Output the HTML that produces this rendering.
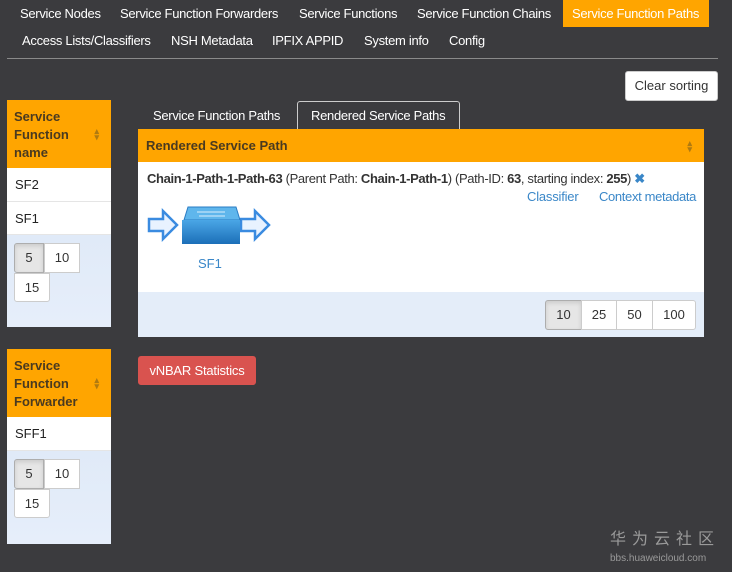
<!DOCTYPE html>
<html><head><meta charset="utf-8"><style>
*{box-sizing:border-box;margin:0;padding:0}
body{width:732px;height:572px;background:#3b3b3e;font-family:"Liberation Sans",sans-serif;font-size:13px;color:#333;position:relative;overflow:hidden}
.a{position:absolute}
.nav{color:#fff;font-size:13px;letter-spacing:-0.3px;white-space:nowrap}
.orange{background:#ffa500}
.hdr{color:#4a3a20;font-weight:bold;font-size:13px;line-height:18px;padding:8px 7px}
.sort{position:absolute;right:12px;top:50%;margin-top:-6px;color:#b07a10;font-size:9px;line-height:6px}
.row{background:#fff;border-bottom:1px solid #e5e5e5;padding:0 8px;display:flex;align-items:center;color:#222}
.foot{background:linear-gradient(#e0eaf8,#e6eefa)}
.btn{position:absolute;background:#fff;border:1px solid #ccc;text-align:center;color:#333;font-size:13px}
.btn.on{background:#e6e6e6;box-shadow:inset 0 2px 4px rgba(0,0,0,.12);border-color:#adadad}
a{color:#3a87c8;text-decoration:none}
</style></head><body>
<div class="a orange" style="left:563px;top:0;width:146px;height:27px"></div>
<div class="a nav" style="left:20px;top:6px">Service Nodes</div>
<div class="a nav" style="left:120px;top:6px">Service Function Forwarders</div>
<div class="a nav" style="left:299px;top:6px">Service Functions</div>
<div class="a nav" style="left:417px;top:6px">Service Function Chains</div>
<div class="a nav" style="left:572px;top:6px">Service Function Paths</div>
<div class="a nav" style="left:22px;top:33px">Access Lists/Classifiers</div>
<div class="a nav" style="left:171px;top:33px">NSH Metadata</div>
<div class="a nav" style="left:272px;top:33px">IPFIX APPID</div>
<div class="a nav" style="left:364px;top:33px">System info</div>
<div class="a nav" style="left:449px;top:33px">Config</div>
<div class="a" style="left:7px;top:58px;width:711px;height:1px;background:#8a8a8a"></div>
<div class="btn" style="left:625px;top:71px;width:93px;height:30px;line-height:28px;border-radius:3px">Clear sorting</div>

<div class="a" style="left:7px;top:100px;width:104px;height:227px">
 <div class="orange hdr" style="height:68px;position:relative">Service<br>Function<br>name<span class="sort">▴<br>▾</span></div>
 <div class="row" style="height:34px">SF2</div>
 <div class="row" style="height:33px">SF1</div>
 <div class="foot" style="height:92px;position:relative">
  <div class="btn on" style="left:7px;top:8px;width:30px;height:30px;line-height:28px;border-radius:3px 0 0 3px">5</div>
  <div class="btn" style="left:37px;top:8px;width:36px;height:30px;line-height:28px">10</div>
  <div class="btn" style="left:7px;top:38px;width:36px;height:29px;line-height:27px;border-radius:0 0 3px 3px">15</div>
 </div>
</div>
<div class="a" style="left:7px;top:349px;width:104px;height:195px">
 <div class="orange hdr" style="height:68px;position:relative">Service<br>Function<br>Forwarder<span class="sort">▴<br>▾</span></div>
 <div class="row" style="height:34px">SFF1</div>
 <div class="foot" style="height:93px;position:relative">
  <div class="btn on" style="left:7px;top:8px;width:30px;height:30px;line-height:28px;border-radius:3px 0 0 3px">5</div>
  <div class="btn" style="left:37px;top:8px;width:36px;height:30px;line-height:28px">10</div>
  <div class="btn" style="left:7px;top:38px;width:36px;height:29px;line-height:27px;border-radius:0 0 3px 3px">15</div>
 </div>
</div>

<div class="a nav" style="left:153px;top:108px">Service Function Paths</div>
<div class="a" style="left:297px;top:101px;width:163px;height:30px;border:1px solid #ccc;border-bottom:none;border-radius:3px 3px 0 0;background:#3b3b3e"></div>
<div class="a nav" style="left:311px;top:108px">Rendered Service Paths</div>

<div class="a" style="left:138px;top:129px;width:566px;height:208px;background:#fff">
 <div class="orange hdr" style="height:33px;position:relative;padding:8px 8px">Rendered Service Path<span class="sort">▴<br>▾</span></div>
 <div class="a" style="left:9px;top:42px;white-space:nowrap;color:#333;letter-spacing:-0.35px"><b>Chain-1-Path-1-Path-63</b> (Parent Path: <b>Chain-1-Path-1</b>) (Path-ID: <b>63</b>, starting index: <b>255</b>) <span style="color:#3a87c8;font-weight:bold">✖</span></div>
 <div class="a" style="left:389px;top:60px;letter-spacing:-0.2px"><a>Classifier</a></div>
 <div class="a" style="left:461px;top:60px;letter-spacing:-0.35px"><a>Context metadata</a></div>
 <svg class="a" style="left:9px;top:76px" width="128" height="42" viewBox="0 0 128 42">
  <defs><linearGradient id="g" x1="0" y1="0" x2="0" y2="1"><stop offset="0" stop-color="#4aa6e6"/><stop offset="1" stop-color="#1c6fb8"/></linearGradient></defs>
  <path d="M2 14h14v-8l14 14l-14 14v-8h-14z" fill="#e8f2ff" stroke="#3a8be0" stroke-width="2.5"/>
  <path d="M94 14h14v-8l14 14l-14 14v-8h-14z" fill="#e8f2ff" stroke="#3a8be0" stroke-width="2.5"/>
  <path d="M41 2h48l4 13h-56z" fill="#5fb6ec" stroke="#2a7cc4"/>
  <rect x="35" y="15" width="58" height="24" fill="url(#g)"/>
  <path d="M50 7h28M52 11h26" stroke="#d8eefb" stroke-width="1"/>
 </svg>
 <div class="a" style="left:60px;top:127px;color:#3a87c8">SF1</div>
 <div class="a" style="left:0;top:163px;width:566px;height:45px;background:#e4edf9">
  <div class="btn on" style="left:407px;top:8px;width:37px;height:30px;line-height:28px;border-radius:3px 0 0 3px">10</div>
  <div class="btn" style="left:443px;top:8px;width:36px;height:30px;line-height:28px">25</div>
  <div class="btn" style="left:478px;top:8px;width:37px;height:30px;line-height:28px">50</div>
  <div class="btn" style="left:514px;top:8px;width:44px;height:30px;line-height:28px;border-radius:0 3px 3px 0">100</div>
 </div>
</div>

<div class="a" style="left:138px;top:356px;width:118px;height:29px;background:#d9534f;border-radius:3px;color:#fff;line-height:29px;text-align:center;letter-spacing:-0.2px">vNBAR Statistics</div>

<div class="a" style="left:610px;top:530px;color:#9a9a9a;font-family:'Liberation Sans','Noto Sans CJK SC',sans-serif;font-size:16px;line-height:20px;letter-spacing:6px">华为云社区</div>
<div class="a" style="left:610px;top:553px;color:#9a9a9a;font-size:10px;line-height:12px">bbs.huaweicloud.com</div>
</body></html>
